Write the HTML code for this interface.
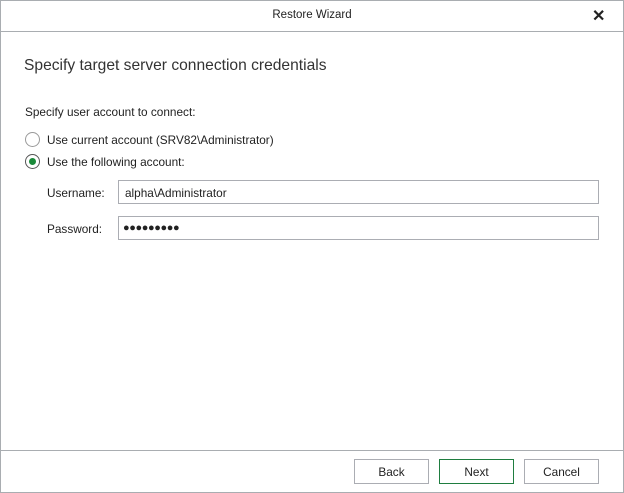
<!DOCTYPE html><html><head><style>
body{margin:0;width:624px;height:493px;background:#fff;font-family:"Liberation Sans",sans-serif;font-size:11.8px;color:#222;position:relative;overflow:hidden}
.a{position:absolute}
.win{left:0;top:0;width:622px;height:491px;border:1px solid #a9adb1}
.inp{border:1px solid #abadb3;height:24px;width:481px;left:118px;box-sizing:border-box}
.btn{top:459px;width:75px;height:25px;box-sizing:border-box;border:1px solid #abadb3;text-align:center;line-height:24px;font-size:11.8px}
.rad{width:15px;height:15px;border:1px solid #9a9a9a;border-radius:50%;box-sizing:border-box;left:25px}
</style></head><body>
<div class="a win"></div>
<div class="a" style="left:0;top:0;width:624px;height:31px;line-height:31px;text-align:center;font-size:11.5px">Restore Wizard</div>
<div class="a" style="left:592px;top:6px;font-size:16px;font-weight:bold">✕</div>
<div class="a" style="left:1px;top:31px;width:622px;height:1px;background:#a9adb1"></div>
<div class="a" style="left:24px;top:57px;font-size:15.6px;color:#333">Specify target server connection credentials</div>
<div class="a" style="left:25px;top:105px">Specify user account to connect:</div>
<div class="a rad" style="top:132px"></div>
<div class="a" style="left:47px;top:133px">Use current account (SRV82\Administrator)</div>
<div class="a rad" style="top:154px;border-color:#555"><div class="a" style="left:3px;top:3px;width:7px;height:7px;border-radius:50%;background:#1a8a3a"></div></div>
<div class="a" style="left:47px;top:155px">Use the following account:</div>
<div class="a" style="left:47px;top:186px">Username:</div>
<div class="a inp" style="top:180px"><span class="a" style="left:6px;top:5px">alpha\Administrator</span></div>
<div class="a" style="left:47px;top:222px">Password:</div>
<div class="a inp" style="top:216px"><span class="a" style="left:4px;top:5px;font-size:11px;letter-spacing:-0.4px">●●●●●●●●●</span></div>
<div class="a" style="left:1px;top:450px;width:622px;height:1px;background:#a9adb1"></div>
<div class="a btn" style="left:354px">Back</div>
<div class="a btn" style="left:439px;border-color:#1f7d40">Next</div>
<div class="a btn" style="left:524px">Cancel</div>
</body></html>
